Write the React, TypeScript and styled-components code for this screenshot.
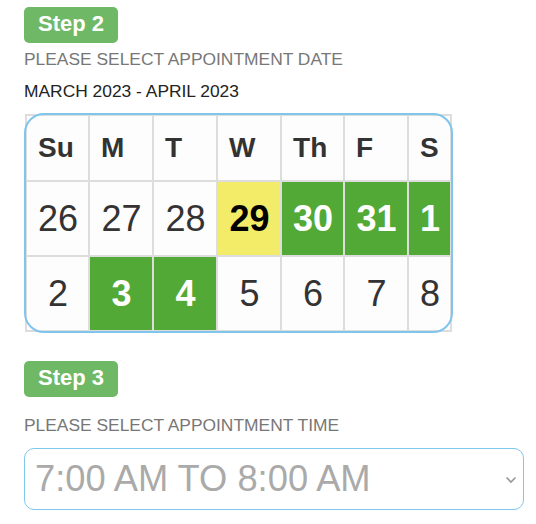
import React from "react";
import styled, { createGlobalStyle } from "styled-components";

const GlobalStyle = createGlobalStyle`
  html, body {
    margin: 0;
    padding: 0;
    background: #ffffff;
    font-family: "Liberation Sans", Arial, Helvetica, sans-serif;
  }
`;

const Page = styled.div`
  display: flex;
  flex-direction: column;
  align-items: flex-start;
  padding: 7px 0 0 24px;
  width: 500px;
`;

const StepBadge = styled.div<{ $mt?: number }>`
  margin-top: ${(p) => p.$mt ?? 0}px;
  background: #6eb866;
  color: #ffffff;
  font-weight: bold;
  font-size: 22px;
  line-height: 25px;
  padding: 4px 14px 7px;
  border-radius: 5px;
`;

const Label = styled.div<{ $mt: number; $dark?: boolean }>`
  margin-top: ${(p) => p.$mt}px;
  font-size: 17.4px;
  line-height: 19px;
  color: ${(p) => (p.$dark ? "#222222" : "#777777")};
`;

const CalendarWrap = styled.div`
  position: relative;
  margin-top: 13px;
  margin-left: 1px;
  &::after {
    content: "";
    position: absolute;
    inset: -1px -1px -1px -1px;
    border: 2px solid #80c5ec;
    border-radius: 20px;
    pointer-events: none;
  }
`;

const Table = styled.table`
  border-collapse: collapse;
  font-family: "Liberation Sans", Arial, Helvetica, sans-serif;
`;

const HeadCell = styled.th<{ $w: number }>`
  width: ${(p) => p.$w}px;
  height: 64px;
  padding: 0 10px 0 11px;
  border: 2px solid #dddddd;
  background: #fdfdfd;
  color: #333333;
  font-size: 28px;
  font-weight: bold;
  text-align: left;
  vertical-align: middle;
`;

type Kind = "plain" | "today" | "open";

const DayCell = styled.td<{ $kind: Kind }>`
  height: 73px;
  padding: 0 10px 0 11px;
  border: 2px solid #dddddd;
  font-size: 36px;
  text-align: center;
  vertical-align: middle;
  background: ${(p) =>
    p.$kind === "today" ? "#f3ec69" : p.$kind === "open" ? "#53a935" : "#fdfdfd"};
  color: ${(p) =>
    p.$kind === "today" ? "#000000" : p.$kind === "open" ? "#ffffff" : "#333333"};
  font-weight: ${(p) => (p.$kind === "plain" ? "normal" : "bold")};
`;

const SelectBox = styled.div`
  margin-top: 13px;
  box-sizing: border-box;
  width: 500px;
  height: 62px;
  border: 1.5px solid #80c7ee;
  border-radius: 10px;
  display: flex;
  align-items: center;
  justify-content: space-between;
  padding: 0 6px 0 10px;
  color: #aaaaaa;
  font-size: 36.3px;
`;

const Chevron = styled.svg`
  width: 12px;
  height: 8px;
  margin-top: 2px;
`;

const days = [
  { d: "Su", w: 40 },
  { d: "M", w: 41 },
  { d: "T", w: 41 },
  { d: "W", w: 41 },
  { d: "Th", w: 40 },
  { d: "F", w: 41 },
  { d: "S", w: 20 },
];

const weeks: { n: number; k: Kind }[][] = [
  [
    { n: 26, k: "plain" },
    { n: 27, k: "plain" },
    { n: 28, k: "plain" },
    { n: 29, k: "today" },
    { n: 30, k: "open" },
    { n: 31, k: "open" },
    { n: 1, k: "open" },
  ],
  [
    { n: 2, k: "plain" },
    { n: 3, k: "open" },
    { n: 4, k: "open" },
    { n: 5, k: "plain" },
    { n: 6, k: "plain" },
    { n: 7, k: "plain" },
    { n: 8, k: "plain" },
  ],
];

export default function App() {
  return (
    <>
      <GlobalStyle />
      <Page>
        <StepBadge>Step 2</StepBadge>
        <Label $mt={7}>PLEASE SELECT APPOINTMENT DATE</Label>
        <Label $mt={13} $dark>
          MARCH 2023 - APRIL 2023
        </Label>
        <CalendarWrap>
          <Table>
            <thead>
              <tr>
                {days.map((c) => (
                  <HeadCell key={c.d} $w={c.w}>
                    {c.d}
                  </HeadCell>
                ))}
              </tr>
            </thead>
            <tbody>
              {weeks.map((w, i) => (
                <tr key={i}>
                  {w.map((c) => (
                    <DayCell key={c.n} $kind={c.k}>
                      {c.n}
                    </DayCell>
                  ))}
                </tr>
              ))}
            </tbody>
          </Table>
        </CalendarWrap>
        <StepBadge $mt={29}>Step 3</StepBadge>
        <Label $mt={19}>PLEASE SELECT APPOINTMENT TIME</Label>
        <SelectBox>
          <span>7:00 AM TO 8:00 AM</span>
          <Chevron viewBox="0 0 12 8">
            <polyline
              points="1.5,1.5 6,6 10.5,1.5"
              fill="none"
              stroke="#999999"
              strokeWidth="1.6"
            />
          </Chevron>
        </SelectBox>
      </Page>
    </>
  );
}
